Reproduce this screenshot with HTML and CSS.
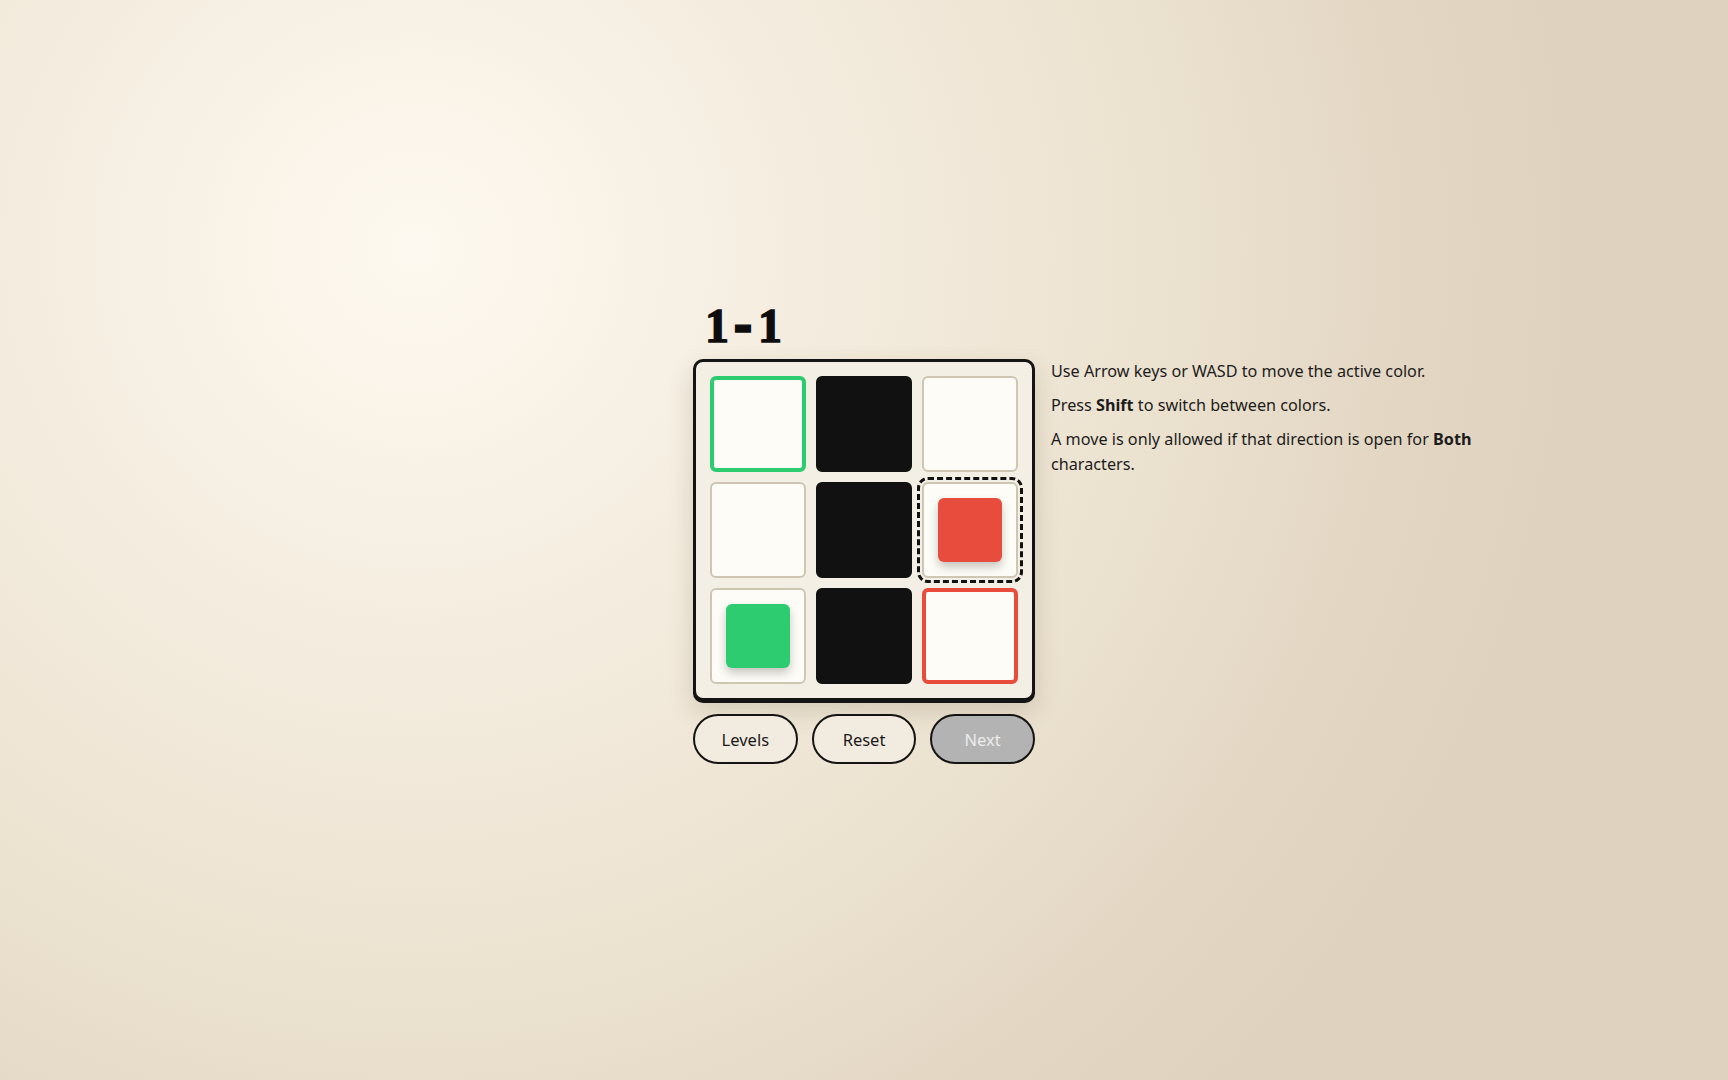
FILE: index.html
```html
<!DOCTYPE html>
<html lang="en">
<head>
<meta charset="utf-8">
<title>1-1</title>
<link rel="stylesheet" href="styles.css">
</head>
<body>
<main class="stage">
  <h1 class="level-title">1<span class="dash">-</span>1</h1>
  <div class="board">
    <div class="cell target-green"></div>
    <div class="cell wall"></div>
    <div class="cell"></div>
    <div class="cell"></div>
    <div class="cell wall"></div>
    <div class="cell active"><div class="piece red"></div></div>
    <div class="cell"><div class="piece green"></div></div>
    <div class="cell wall"></div>
    <div class="cell target-red"></div>
  </div>
  <div class="help">
    <p>Use Arrow keys or WASD to move the active color.</p>
    <p>Press <b>Shift</b> to switch between colors.</p>
    <p>A move is only allowed if that direction is open for <b>Both</b> characters.</p>
  </div>
  <div class="controls">
    <button class="btn">Levels</button>
    <button class="btn">Reset</button>
    <button class="btn disabled">Next</button>
  </div>
</main>
</body>
</html>
```
FILE: styles.css
```css
html, body {
  margin: 0;
  height: 100%;
}
body {
  font-family: "Noto Sans", "Open Sans", sans-serif;
  color: #1a1a1a;
  background: radial-gradient(circle at 24% 23%, #fef9f0 0%, #f5eee1 22%, #ece2d0 48%, #e3d7c4 64%, #dfd2bf 76%, #dfd2bf 100%);
  overflow: hidden;
}
.stage {
  height: 100%;
  display: grid;
  grid-template-columns: 1fr 342px 1fr;
  grid-template-rows: auto auto auto;
  align-content: center;
  padding-bottom: 18px;
  box-sizing: border-box;
}
.level-title {
  grid-column: 2;
  grid-row: 1;
  margin: 0 0 9px 0;
  padding: 3px 0 0 12px;
  font-family: "Liberation Serif", "DejaVu Serif", serif;
  font-weight: 700;
  font-size: 48px;
  line-height: 48px;
  letter-spacing: 4px;
  color: #0d0d0d;
  -webkit-text-stroke: 1.4px #0d0d0d;
}
.level-title .dash {
  font-family: "DejaVu Sans", sans-serif;
  font-weight: 700;
  letter-spacing: 5px;
}
.board {
  grid-column: 2;
  grid-row: 2;
  box-sizing: border-box;
  width: 342px;
  height: 342px;
  padding: 14px;
  border: 3px solid #141414;
  border-radius: 10px;
  background: #f4efe4;
  box-shadow: 0 2px 0 #141414, 0 10px 24px rgba(80, 60, 30, 0.18);
  display: grid;
  grid-template-columns: repeat(3, 1fr);
  grid-template-rows: repeat(3, 1fr);
  gap: 10px;
}
.cell {
  box-sizing: border-box;
  border: 2px solid #cfc5b3;
  border-radius: 6px;
  background: #fefcf6;
  display: flex;
  align-items: center;
  justify-content: center;
}
.cell.wall {
  background: #111111;
  border-color: #111111;
}
.cell.target-green {
  border: 4px solid #2ecc71;
}
.cell.target-red {
  border: 4px solid #e74c3c;
}
.cell.active {
  outline: 3px dashed #111;
  outline-offset: 2px;
}
.piece {
  width: 64px;
  height: 64px;
  border-radius: 6px;
  box-shadow: 0 5px 10px rgba(0, 0, 0, 0.22);
}
.piece.red { background: #e74c3c; }
.piece.green { background: #2ecc71; }
.help {
  grid-column: 3;
  grid-row: 2;
  align-self: start;
  padding-left: 16px;
  max-width: 430px;
  font-size: 16.2px;
  line-height: 25px;
  color: #1c1c1c;
}
.help p {
  margin: 0 0 9px 0;
}
.help b { font-weight: 700; }
.controls {
  grid-column: 2;
  grid-row: 3;
  margin-top: 13px;
  display: flex;
  gap: 14px;
}
.btn {
  flex: 1;
  height: 50px;
  border: 2px solid #141414;
  border-radius: 25px;
  background: #f2ebdf;
  font-family: "Noto Sans", "Open Sans", sans-serif;
  font-size: 16.5px;
  color: #1a1a1a;
  padding: 0;
}
.btn.disabled {
  background: #b3b3b3;
  color: #ececec;
}
```
